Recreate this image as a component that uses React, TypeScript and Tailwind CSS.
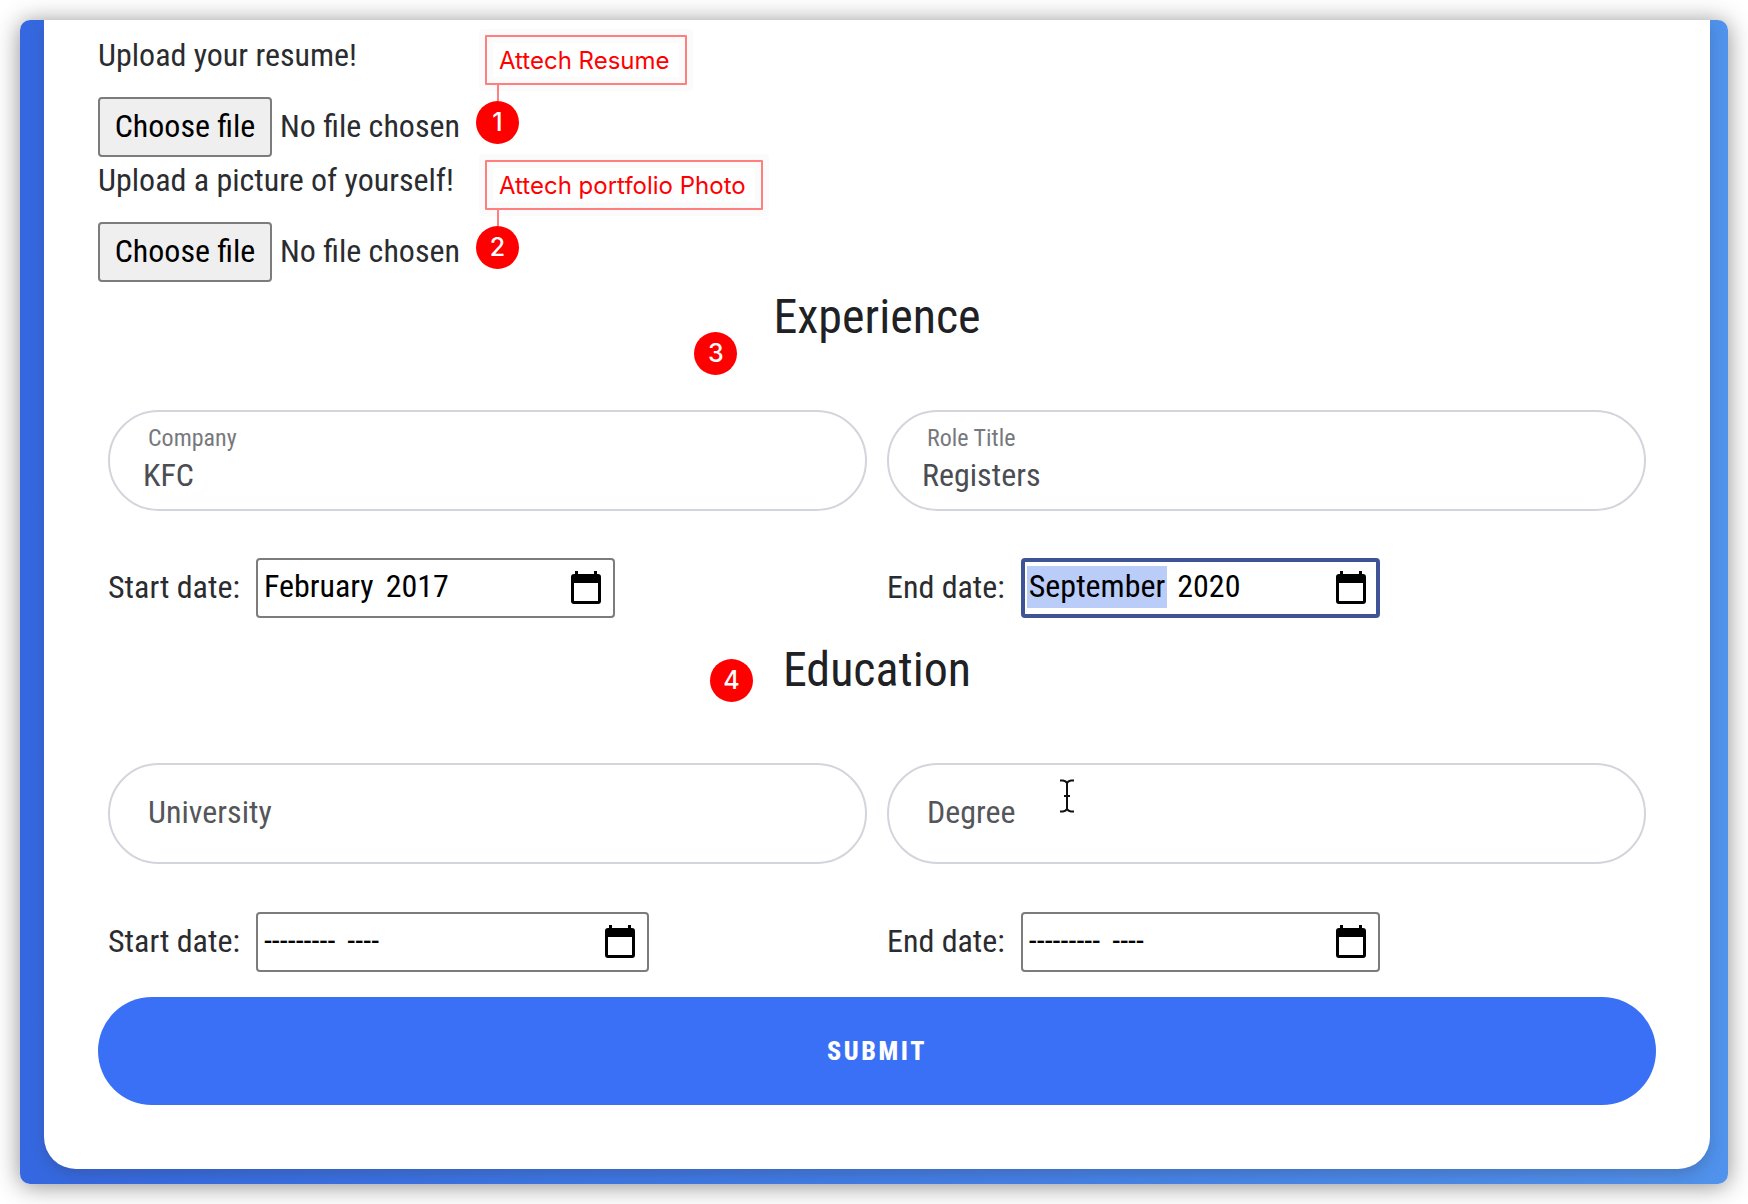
import React from "react";

type Callout = { n: number; text?: string };

function Badge({ n }: Callout) {
  return (
    <span className="flex size-[43px] items-center justify-center rounded-full bg-[#ff0000] font-['Inter',sans-serif] text-[25px] leading-none font-medium text-white">
      {n}
    </span>
  );
}

function Note({ n, text }: Callout) {
  return (
    <div className="absolute top-[15px] left-[387px] flex flex-col items-start">
      <span className="rounded-[1px] border-2 border-[#ff7f7f] bg-white pt-[2px] pr-[15px] pl-3 font-['Inter',sans-serif] text-[24px] leading-[44px] font-normal whitespace-nowrap text-[#ff0000] shadow-[0_0_0_6px_#fbfbfb,inset_0_0_0_6px_#fbfbfb]">
        {text}
      </span>
      <span className="ml-3 h-4 w-[2px] bg-[#ff7f7f]" />
      <span className="-ml-[9px]">
        <Badge n={n} />
      </span>
    </div>
  );
}

function Upload({ id, label, n, note }: { id: string; label: string; n: number; note: string }) {
  return (
    <div className="relative flex h-[125px] flex-col">
      <p className="pt-[10px] leading-[50px]">{label}</p>
      <div className="mt-[17px] flex items-center gap-2">
        <label
          htmlFor={id}
          className="flex h-[60px] w-[174px] shrink-0 items-center justify-center rounded-[4px] border-2 border-[#7c7c7c] bg-[#efefef] pb-[3px] text-black"
        >
          Choose file
        </label>
        <input id={id} type="file" className="sr-only" />
        <span className="pb-[3px]">No file chosen</span>
      </div>
      <Note n={n} text={note} />
    </div>
  );
}

function Field({ id, label, value, children }: { id: string; label: string; value?: string; children?: React.ReactNode }) {
  return (
    <div className="relative flex h-[101px] flex-col justify-center rounded-full border-2 border-[#d3d5dc] bg-white text-[#4a4d52]">
      {value ? (
        <>
          <label htmlFor={id} className="pl-[38px] text-[24px] leading-7 text-[#77797d]">
            {label}
          </label>
          <input id={id} defaultValue={value} className="w-full bg-transparent px-[33px] leading-[46px] outline-none" />
        </>
      ) : (
        <input
          id={id}
          aria-label={label}
          placeholder={label}
          className="w-full bg-transparent px-[38px] pb-[3px] outline-none placeholder:text-[#54565a]"
        />
      )}
      {children}
    </div>
  );
}

function CalendarIcon() {
  return (
    <svg aria-hidden="true" viewBox="0 0 32 34" className="h-[34px] w-8">
      <path d="M5 0H8V3H24V0H27V3H28Q31 3 31 6V30Q31 33 28 33H4Q1 33 1 30V6Q1 3 4 3H5Z" fill="#000" />
      <path d="M4 12H28V30H4Z" fill="#fff" />
    </svg>
  );
}

type MonthProps = { id: string; label: string; month?: string; year?: string; look: string; monthLook?: string };

function MonthField({ id, label, month = "---------", year = "----", look, monthLook = "" }: MonthProps) {
  return (
    <div className="flex items-center gap-4">
      <label htmlFor={id} className="pb-[3px] whitespace-nowrap">
        {label}
      </label>
      <div className={`flex h-[60px] items-center rounded-[4px] bg-white text-black ${look}`}>
        <input
          id={id}
          defaultValue={month}
          className={`mb-[2px] h-[42px] field-sizing-content px-[2px] pb-[2px] outline-none ${monthLook}`}
        />
        <input
          aria-label={`${label} year`}
          defaultValue={year}
          className="mb-[2px] ml-2 h-[42px] field-sizing-content px-[2px] pb-[2px] outline-none"
        />
        <button type="button" aria-label={`${label} open calendar`} className="ml-auto">
          <CalendarIcon />
        </button>
      </div>
    </div>
  );
}

function Heading({ n, children, look }: { n: number; children: string; look: string }) {
  return (
    <div className="flex justify-center">
      <h2 className="relative text-[48px] leading-[68px] text-[#202124]">
        {children}
        <span className={`absolute ${look}`}>
          <Badge n={n} />
        </span>
      </h2>
    </div>
  );
}

export default function App() {
  return (
    <main className="min-h-screen bg-white p-5 font-['Roboto_Condensed','Liberation_Sans_Narrow',sans-serif] text-[32px] text-[#2b2c2f]">
      <div className="overflow-hidden rounded-[10px] bg-linear-to-r from-[#3568e0] to-[#5092ec] pr-[18px] pb-[15px] pl-6 shadow-[0_2px_24px_rgba(0,0,0,0.45)]">
        <form className="rounded-b-[32px] bg-white px-[54px] pb-16 shadow-[0_6px_14px_rgba(50,50,80,0.25)]">
          <Upload id="resume" label="Upload your resume!" n={1} note="Attech Resume" />
          <Upload id="photo" label="Upload a picture of yourself!" n={2} note="Attech portfolio Photo" />

          <section className="pr-[10px] pl-[10px] pt-[13px]">
            <Heading n={3} look="top-[49px] -left-[79px]">Experience</Heading>
            <div className="mt-[59px] grid grid-cols-2 gap-x-5 gap-y-[47px]">
              <Field id="company" label="Company" value="KFC" />
              <Field id="role" label="Role Title" value="Registers" />
              <MonthField
                id="exp-start"
                label="Start date:"
                month="February"
                year="2017"
                look="w-[359px] border-2 border-[#7c7c7c] pr-[11px] pl-[4px]"
              />
              <MonthField
                id="exp-end"
                label="End date:"
                month="September"
                year="2020"
                look="w-[359px] border-4 border-[#3f5496] pr-[9px] pl-[2px]"
                monthLook="bg-[#bacdf8]"
              />
            </div>
          </section>

          <section className="px-[10px] pt-[18px]">
            <Heading n={4} look="top-[23px] -left-[73px]">Education</Heading>
            <div className="mt-[59px] grid grid-cols-2 gap-x-5 gap-y-12">
              <Field id="university" label="University" />
              <Field id="degree" label="Degree">
                <svg
                  aria-hidden="true"
                  viewBox="0 0 16 36"
                  className="absolute top-[13px] left-[170px] h-9 w-4"
                  fill="none"
                  stroke="#111"
                  strokeWidth="2"
                >
                  <path d="M8 4V32M5 18H11" />
                  <path d="M1 2.5H4Q7 3 8 5Q9 3 12 2.5H15M1 33.5H4Q7 33 8 31Q9 33 12 33.5H15" />
                </svg>
              </Field>
              <MonthField id="edu-start" label="Start date:" look="w-[393px] border-2 border-[#7c7c7c] pr-[11px] pl-[4px]" />
              <MonthField id="edu-end" label="End date:" look="w-[359px] border-2 border-[#7c7c7c] pr-[11px] pl-[4px]" />
            </div>
          </section>

          <button
            type="button"
            className="mt-[25px] flex h-[108px] w-full items-center justify-center rounded-full bg-[#3a70f5] text-[26px] font-extrabold tracking-widest text-white"
          >
            SUBMIT
          </button>
        </form>
      </div>
    </main>
  );
}
